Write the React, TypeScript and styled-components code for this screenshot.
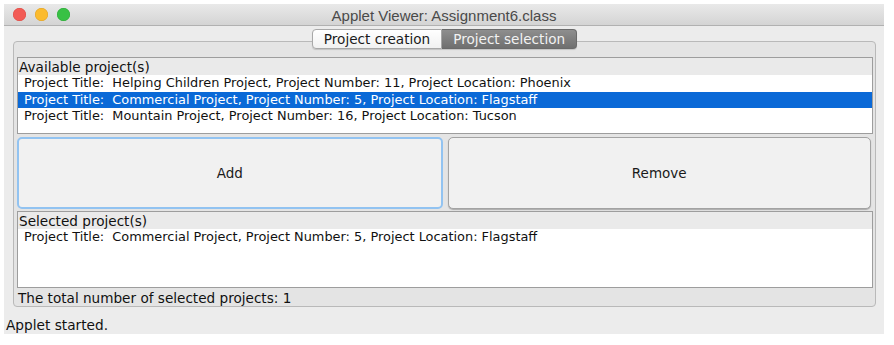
import React from "react";
import styled, { createGlobalStyle } from "styled-components";

const GlobalStyle = createGlobalStyle`
  html, body {
    margin: 0;
    padding: 0;
    background: #ffffff;
  }
  body {
    font-family: "DejaVu Sans", "Lucida Grande", sans-serif;
  }
`;

const projects = [
  { title: "Helping Children Project", number: 11, location: "Phoenix" },
  { title: "Commercial Project", number: 5, location: "Flagstaff" },
  { title: "Mountain Project", number: 16, location: "Tucson" },
];

const selectedIndex = 1;

const describe = (p: { title: string; number: number; location: string }) =>
  `Project Title:\u00a0 ${p.title}, Project Number: ${p.number}, Project Location: ${p.location}`;

const App: React.FC = () => {
  return (
    <>
      <GlobalStyle />
      <Window>
        <TitleBar>
          <Lights>
            <Light color="#f25b55" border="#dc4842" />
            <Light color="#fbbb2e" border="#dfa023" />
            <Light color="#38c145" border="#2aa835" />
          </Lights>
          <Title>Applet Viewer: Assignment6.class</Title>
        </TitleBar>
        <Body>
          <TabRow>
            <Tab>Project creation</Tab>
            <Tab active>Project selection</Tab>
          </TabRow>
          <Pane>
            <ListPanel height={77}>
              <ListLabel>Available project(s)</ListLabel>
              {projects.map((p, i) => (
                <Row key={i} selected={i === selectedIndex}>
                  {describe(p)}
                </Row>
              ))}
            </ListPanel>
            <ButtonRow>
              <Button focused>Add</Button>
              <Button>Remove</Button>
            </ButtonRow>
            <ListPanel height={77}>
              <ListLabel>Selected project(s)</ListLabel>
              <Row>{describe(projects[1])}</Row>
            </ListPanel>
            <Total>The total number of selected projects: 1</Total>
          </Pane>
          <Status>Applet started.</Status>
        </Body>
      </Window>
    </>
  );
};

export default App;

/* Styled Components */
const Window = styled.div`
  margin: 4px 0 0 4px;
  width: 880px;
  height: 330px;
  display: flex;
  flex-direction: column;
  background: #ececec;
  overflow: hidden;
`;

const TitleBar = styled.div`
  height: 21px;
  flex-shrink: 0;
  display: flex;
  align-items: center;
  justify-content: center;
  position: relative;
  background: linear-gradient(#e9e9e9, #d4d4d4);
  border-bottom: 1px solid #b1b1b1;
`;

const Lights = styled.div`
  position: absolute;
  left: 9px;
  top: 4px;
  display: flex;
  gap: 9px;
`;

const Light = styled.span<{ color: string; border: string }>`
  width: 13px;
  height: 13px;
  border-radius: 50%;
  background: ${(p) => p.color};
  box-shadow: inset 0 0 0 0.5px ${(p) => p.border};
`;

const Title = styled.div`
  font-family: "Liberation Sans", Arial, sans-serif;
  font-size: 15px;
  color: #4a4a4a;
  margin-top: 1px;
`;

const Body = styled.div`
  flex: 1;
  display: flex;
  flex-direction: column;
  padding: 3px 8px 0 9px;
`;

const TabRow = styled.div`
  display: flex;
  justify-content: center;
  margin-bottom: -8px;
  position: relative;
  z-index: 1;
`;

const Tab = styled.div<{ active?: boolean }>`
  height: 18px;
  display: flex;
  align-items: center;
  padding: 0 11px;
  font-size: 13.6px;
  color: ${(p) => (p.active ? "#f2f2f2" : "#1a1a1a")};
  background: ${(p) =>
    p.active
      ? "linear-gradient(#8e8e8e, #6f6f6f)"
      : "linear-gradient(#ffffff, #f1f1f1)"};
  border: 1px solid ${(p) => (p.active ? "#6a6a6a" : "#a8a8a8")};
  border-radius: ${(p) => (p.active ? "0 4px 4px 0" : "4px 0 0 4px")};
  ${(p) => (p.active ? "border-left: none;" : "")}
  box-shadow: 0 1px 1px rgba(0, 0, 0, 0.15);
`;

const Pane = styled.div`
  width: 863px;
  height: 266px;
  box-sizing: border-box;
  border: 1px solid #b9b9b9;
  border-radius: 4px;
  background: #e4e4e4;
  padding: 15px 2px 0 3px;
  display: flex;
  flex-direction: column;
`;

const ListPanel = styled.div<{ height: number }>`
  height: ${(p) => p.height}px;
  flex-shrink: 0;
  box-sizing: border-box;
  border: 1px solid #9d9d9d;
  background: #ffffff;
  display: flex;
  flex-direction: column;
  overflow: hidden;
`;

const ListLabel = styled.div`
  height: 17px;
  line-height: 18px;
  padding-left: 1px;
  background: #eaeaea;
  font-size: 13.6px;
  color: #111111;
`;

const Row = styled.div<{ selected?: boolean }>`
  height: 16.7px;
  line-height: 16.7px;
  padding-left: 6px;
  font-size: 12.9px;
  white-space: nowrap;
  color: ${(p) => (p.selected ? "#ffffff" : "#111111")};
  background: ${(p) => (p.selected ? "#0a69d7" : "transparent")};
`;

const ButtonRow = styled.div`
  display: flex;
  gap: 5px;
  margin: 3px 2px 2px 0;
  height: 72px;
  flex-shrink: 0;
`;

const Button = styled.div<{ focused?: boolean }>`
  flex: 1;
  display: flex;
  align-items: center;
  justify-content: center;
  box-sizing: border-box;
  font-size: 13.5px;
  color: #1a1a1a;
  background: #f1f1f1;
  border-radius: 5px;
  border: ${(p) => (p.focused ? "2px solid #92c3f1" : "1px solid #a3a3a3")};
  box-shadow: ${(p) =>
    p.focused ? "none" : "0 1px 1px rgba(0, 0, 0, 0.25)"};
`;

const Total = styled.div`
  height: 19px;
  line-height: 20px;
  padding-left: 1px;
  font-size: 13.6px;
  color: #111111;
`;

const Status = styled.div`
  margin: 10px 0 0 -7px;
  font-size: 13.7px;
  color: #111111;
`;
